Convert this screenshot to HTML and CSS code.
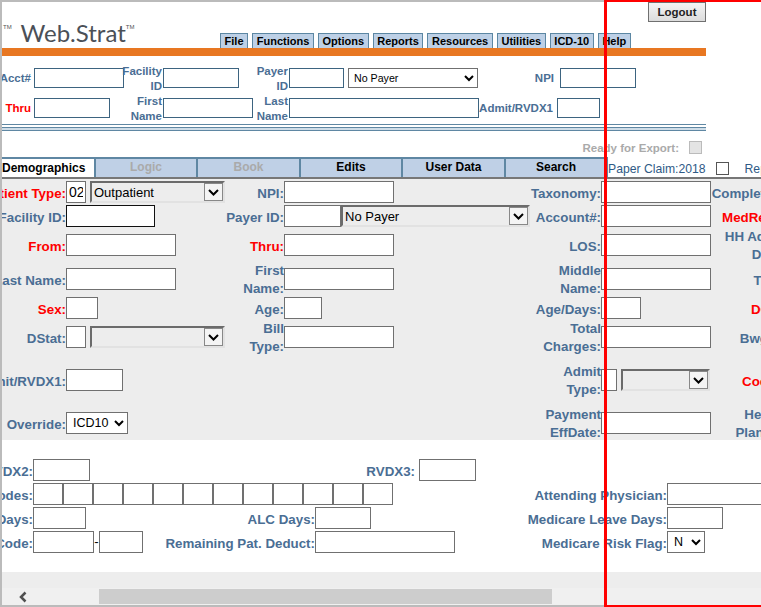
FILE: index.html
```html
<!DOCTYPE html>
<html>
<head>
<title>Web.Strat</title>
<link rel="stylesheet" href="styles.css">
</head>
<body>

<div id="janela">

  <div id="topo">
    <div id="logo"><span class="tmesq">|<sup>TM</sup></span> Web.Strat<sup>TM</sup></div>
    <button id="logout">Logout</button>
    <div id="menu">
      <a>File</a><a>Functions</a><a>Options</a><a>Reports</a><a>Resources</a><a>Utilities</a><a>ICD-10</a><a>Help</a>
    </div>
  </div>
  <div id="laranja"></div>

  <form id="busca" autocomplete="off">
    <label class="lb pr3">Acct#</label>
    <div class="cel"><input class="az" style="width:90px"></div>
    <label class="lb pr1"><span>Facility<br>ID</span></label>
    <div class="cel"><input class="az" style="width:76px"></div>
    <label class="lb pr1"><span>Payer<br>ID</span></label>
    <div class="cel">
      <input class="az" style="width:55px">
      <select id="selpayer"><option>No Payer</option></select>
    </div>
    <label class="lb pr3">NPI</label>
    <div class="cel"><input class="az ml3" style="width:76px"></div>

    <label class="lb pr3 red">Thru</label>
    <div class="cel"><input class="az" style="width:76px"></div>
    <label class="lb pr1"><span>First<br>Name</span></label>
    <div class="cel"><input class="az" style="width:90px"></div>
    <label class="lb pr1"><span>Last<br>Name</span></label>
    <div class="cel"><input class="az" style="width:190px"></div>
    <label class="lb pr4">Admit/RVDX1</label>
    <div class="cel"><input class="az" style="width:43px"></div>
  </form>

  <div id="regra"><div></div></div>

  <div id="pronto">
    <span>Ready for Export:</span>
    <input type="checkbox" disabled>
  </div>

  <div id="abas">
    <a class="ativa" style="width:92px">Demographics</a>
    <a class="off" style="width:100px">Logic</a>
    <a class="off" style="width:101px">Book</a>
    <a style="width:100px">Edits</a>
    <a style="width:101px">User Data</a>
    <a style="width:100px">Search</a>
    <div id="papel">
      <span>Paper Claim:2018</span>
      <input type="checkbox">
      <span class="re">Reprint</span>
    </div>
  </div>

  <form id="painel" autocomplete="off">
    <label class="lbl red">Patient Type:</label>
    <div class="cel">
      <input value="02" style="width:20px">
      <div class="combo" style="width:135px"><select><option>Outpatient</option></select><span class="seta"><svg width="11" height="7" viewBox="0 0 11 7"><path d="M1 1l4.500 4.500L10 1" fill="none" stroke="#000" stroke-width="2"/></svg></span></div>
    </div>
    <label class="lbl">NPI:</label>
    <div class="cel"><input style="width:110px"></div>
    <label class="lbl">Taxonomy:</label>
    <div class="cel"><input style="width:110px"></div>
    <label class="lbl ext">Completed:</label>

    <label class="lbl">Facility ID:</label>
    <div class="cel"><input class="foco" style="width:89px"></div>
    <label class="lbl">Payer ID:</label>
    <div class="cel">
      <input style="width:57px">
      <div class="combo colado" style="width:189px"><select><option>No Payer</option></select><span class="seta"><svg width="11" height="7" viewBox="0 0 11 7"><path d="M1 1l4.500 4.500L10 1" fill="none" stroke="#000" stroke-width="2"/></svg></span></div>
    </div>
    <label class="lbl">Account#:</label>
    <div class="cel"><input style="width:110px"></div>
    <label class="lbl ext red">MedRec#:</label>

    <label class="lbl red">From:</label>
    <div class="cel"><input style="width:110px"></div>
    <label class="lbl red">Thru:</label>
    <div class="cel"><input style="width:110px"></div>
    <label class="lbl">LOS:</label>
    <div class="cel"><input style="width:110px"></div>
    <label class="lbl ext"><span>HH Admit<br>Date:</span></label>

    <label class="lbl">Last Name:</label>
    <div class="cel"><input style="width:110px"></div>
    <label class="lbl"><span>First<br>Name:</span></label>
    <div class="cel"><input style="width:110px"></div>
    <label class="lbl"><span>Middle<br>Name:</span></label>
    <div class="cel"><input style="width:110px"></div>
    <label class="lbl ext">Title:</label>

    <label class="lbl red">Sex:</label>
    <div class="cel"><input style="width:32px"></div>
    <label class="lbl">Age:</label>
    <div class="cel"><input style="width:38px"></div>
    <label class="lbl">Age/Days:</label>
    <div class="cel"><input style="width:40px"></div>
    <label class="lbl ext red">DOB:</label>

    <label class="lbl">DStat:</label>
    <div class="cel">
      <input style="width:20px">
      <div class="combo" style="width:135px"><select disabled></select><span class="seta"><svg width="11" height="7" viewBox="0 0 11 7"><path d="M1 1l4.500 4.500L10 1" fill="none" stroke="#000" stroke-width="2"/></svg></span></div>
    </div>
    <label class="lbl"><span>Bill<br>Type:</span></label>
    <div class="cel"><input style="width:110px"></div>
    <label class="lbl"><span>Total<br>Charges:</span></label>
    <div class="cel"><input style="width:110px"></div>
    <label class="lbl ext">Bwght:</label>

    <label class="lbl">Admit/RVDX1:</label>
    <div class="cel"><input style="width:57px"></div>
    <div></div>
    <div></div>
    <label class="lbl"><span>Admit<br>Type:</span></label>
    <div class="cel">
      <input style="width:16px">
      <div class="combo" style="width:89px"><select disabled></select><span class="seta"><svg width="11" height="7" viewBox="0 0 11 7"><path d="M1 1l4.500 4.500L10 1" fill="none" stroke="#000" stroke-width="2"/></svg></span></div>
    </div>
    <label class="lbl ext red">Coder:</label>

    <label class="lbl">Override:</label>
    <div class="cel"><select class="simples" style="width:62px"><option>ICD10</option></select></div>
    <div></div>
    <div></div>
    <label class="lbl"><span>Payment<br>EffDate:</span></label>
    <div class="cel"><input style="width:110px"></div>
    <label class="lbl ext"><span>Health<br>Plan ID:</span></label>
  </form>

  <form id="branco" autocomplete="off">
    <label class="lbl">RVDX2:</label>
    <div class="cel"><input style="width:57px"></div>
    <div class="cel span2 fim">
      <label class="lbl pr4">RVDX3:</label>
      <input style="width:57px">
    </div>
    <div></div>
    <div></div>

    <label class="lbl">Codes:</label>
    <div class="cel span3">
      <input class="cod"><input class="cod"><input class="cod"><input class="cod"><input class="cod"><input class="cod"><input class="cod"><input class="cod"><input class="cod"><input class="cod"><input class="cod"><input class="cod">
    </div>
    <label class="lbl">Attending Physician:</label>
    <div class="cel"><input style="width:110px"></div>

    <label class="lbl">Days:</label>
    <div class="cel"><input style="width:53px"></div>
    <label class="lbl">ALC Days:</label>
    <div class="cel"><input style="width:56px"></div>
    <label class="lbl">Medicare Leave Days:</label>
    <div class="cel"><input style="width:56px"></div>

    <label class="lbl">Code:</label>
    <div class="cel">
      <input style="width:61px"><span class="traco">-</span><input style="width:44px">
    </div>
    <label class="lbl">Remaining Pat. Deduct:</label>
    <div class="cel"><input style="width:140px"></div>
    <label class="lbl">Medicare Risk Flag:</label>
    <div class="cel"><select class="simples" style="width:38px"><option>N</option></select></div>
  </form>

  <div id="rodape"></div>

  <div id="rolagem">
    <span id="esq"><svg width="12" height="12" viewBox="0 0 12 12"><path d="M8.500 1.500L4 6l4.500 4.500" fill="none" stroke="#505050" stroke-width="2.500"/></svg></span>
    <div id="polegar"></div>
  </div>

</div>

<div id="vermelho"></div>

</body>
</html>
```

FILE: styles.css
```css
*{ box-sizing: border-box; font-family: "Liberation Sans", Arial, sans-serif; }
html,body{ margin: 0; padding: 0; background-color: #FFF; overflow: hidden; }
body{ position: relative; width: 761px; height: 607px; }

#janela{ width: 761px; height: 607px; border-top: 2px solid #BBB; border-left: 2px solid #BBB; border-bottom: 2px solid #BBB; overflow: hidden; }
#vermelho{ position: absolute; left: 604px; top: 0; width: 300px; height: 607px; border: 3px solid #F00; border-top-width: 2px; border-bottom-width: 2px; }

/* topo */
#topo{ display: grid; grid-template-columns: 218px 486px; grid-template-rows: 31px 15px; width: 704px; }
#logo{ grid-row: 1 / 3; align-self: end; height: 30px; font-family: Lato, sans-serif; font-size: 24px; line-height: 30px; color: #4B5057; white-space: nowrap; }
#logo sup{ font-family: "Liberation Sans", sans-serif; font-size: 6px; line-height: 0; vertical-align: 13px; color: #555; }
.tmesq{ font-family: Lato, sans-serif; margin-left: -5px; margin-right: 3px; }
#logout{ justify-self: end; width: 58px; height: 20px; padding: 0; border: 1px solid #707070; background: linear-gradient(#F4F4F4, #DCDCDC); font-size: 11.5px; font-weight: bold; color: #222; }
#menu{ grid-column: 2; display: flex; gap: 4px; }
#menu a{ height: 15px; padding: 0 3.6px; border: 1px solid #5C87A3; border-bottom: none; background-color: #BDD0E6; font-size: 11px; font-weight: bold; line-height: 14px; color: #000; white-space: nowrap; }
#laranja{ width: 704px; height: 8px; background-color: #E87722; }

/* busca */
#busca{ display: grid; grid-template-columns: 32px 90px 39px 87px 39px 189px 79px 78px; grid-template-rows: 30px 26px; width: 704px; margin-top: 12px; align-items: start; }
.lb{ display: flex; justify-content: flex-end; align-items: center; height: 20px; padding-top: 1px; font-size: 11.5px; font-weight: bold; line-height: 15px; color: #4A6E94; text-align: right; white-space: nowrap; }
.pr1{ padding-right: 1px; }
.pr3{ padding-right: 3px; }
.pr4{ padding-right: 4px; }
.ml3{ margin-left: 3px; }
.cel{ display: flex; align-items: flex-start; }
input{ height: 22px; padding: 1px 2px; border: 1px solid #707070; background-color: #FFF; font-size: 14px; border-radius: 0; outline: none; flex: none; }
input.az{ height: 20px; border-color: #3D6480; }
input.foco{ border-color: #111; }
#selpayer{ width: 130px; height: 20px; margin-left: 4px; padding-left: 1px; border: 1px solid #707070; background-color: #FFF; font-size: 10.67px; border-radius: 0; }

#regra{ width: 704px; height: 7px; margin-top: 0; border-top: 1px solid #5F87A3; padding-top: 2px; }
#regra div{ height: 4px; border-top: 1px solid #5F87A3; border-bottom: 1px solid #5F87A3; background-color: #CFDDE8; }

#pronto{ display: flex; justify-content: flex-end; align-items: center; width: 700px; height: 13px; margin-top: 10px; padding-top: 1px; font-size: 11.5px; font-weight: bold; color: #AAA; }
#pronto input{ width: 13px; height: 13px; margin: -1px 0 0 10px; appearance: none; background-color: #E4E4E4; border: 1px solid #BBB; }

/* abas */
#abas{ display: flex; align-items: stretch; height: 22px; margin-top: 3px; border-bottom: 2px solid #777; width: 900px; }
#abas a{ flex: none; height: 20px; margin-right: 2px; border-top: 2px solid #5F87A3; background-color: #BFD0E6; font-size: 12px; font-weight: bold; line-height: 17px; text-align: center; color: #000; box-shadow: 2px 0 0 #5F87A3; }
#abas a.ativa{ background-color: #FFF; text-align: left; line-height: 19px; box-shadow: 2px 0 0 #5F87A3; }
#abas a.off{ color: #AAA; }
#papel{ display: flex; align-items: center; height: 20px; font-size: 12.2px; color: #2F5A86; white-space: nowrap; padding-top: 3px; }
#papel input{ width: 13px; height: 13px; margin: 0 16px 0 10px; appearance: none; border: 1px solid #555; background-color: #FFF; }
#papel .re{ font-weight: normal; }

/* painel cinza */
#painel{ display: grid; grid-template-columns: 64px 159px 59px 246px 71px 110px 74px; grid-template-rows: 24px 29px 34px 29px 29px 43px 43px 28px; align-items: start; width: 900px; height: 261px; padding-top: 2px; background-color: #EDEDED; }
.lbl{ display: flex; justify-content: flex-end; align-items: center; height: 22px; padding-top: 3px; font-size: 13.33px; font-weight: bold; line-height: 18px; color: #4A6E94; text-align: right; white-space: nowrap; }
.lbl span{ margin-top: -2px; }
.red{ color: #F00; }

.combo{ position: relative; flex: none; height: 22px; margin-left: 4px; border-top: 2px solid #6B6B6B; border-left: 2px solid #6B6B6B; border-bottom: 2px solid #E2E2E2; border-right: 2px solid #E2E2E2; background-color: #EDEDED; }
.combo.colado{ margin-left: 0; }
.combo select{ display: block; width: 100%; height: 18px; padding: 0 0 0 2px; border: none; background: transparent; appearance: none; font-size: 13px; color: #000; opacity: 1; }
.seta{ position: absolute; right: 0; top: 0; display: flex; justify-content: center; align-items: center; width: 19px; height: 18px; border: 1px solid #888; background-color: #F4F4F4; }
.simples{ height: 22px; padding: 0 0 0 2px; border: 1px solid #707070; background-color: #FFF; font-size: 12.5px; color: #000; border-radius: 0; flex: none; }

/* parte branca */
#branco{ display: grid; grid-template-columns: 31px 200px 82px 161px 191px 110px; grid-template-rows: 24px 24px 24px 41px; align-items: start; width: 900px; height: 132px; padding-top: 19px; background-color: #FFF; }
.span2{ grid-column: 3 / 5; }
.span3{ grid-column: 2 / 5; }
.fim{ justify-content: flex-end; }
.cod{ width: 30px; }
.traco{ width: 5px; font-size: 13px; line-height: 22px; text-align: center; }

/* rodape e barra de rolagem */
#rodape{ height: 16px; background-color: #EDEDED; }
#rolagem{ display: flex; align-items: center; width: 900px; height: 17px; background-color: #F0F0F0; }
#esq{ display: flex; width: 97px; padding-left: 15px; }
#polegar{ width: 453px; height: 15px; background-color: #CDCDCD; }
```
